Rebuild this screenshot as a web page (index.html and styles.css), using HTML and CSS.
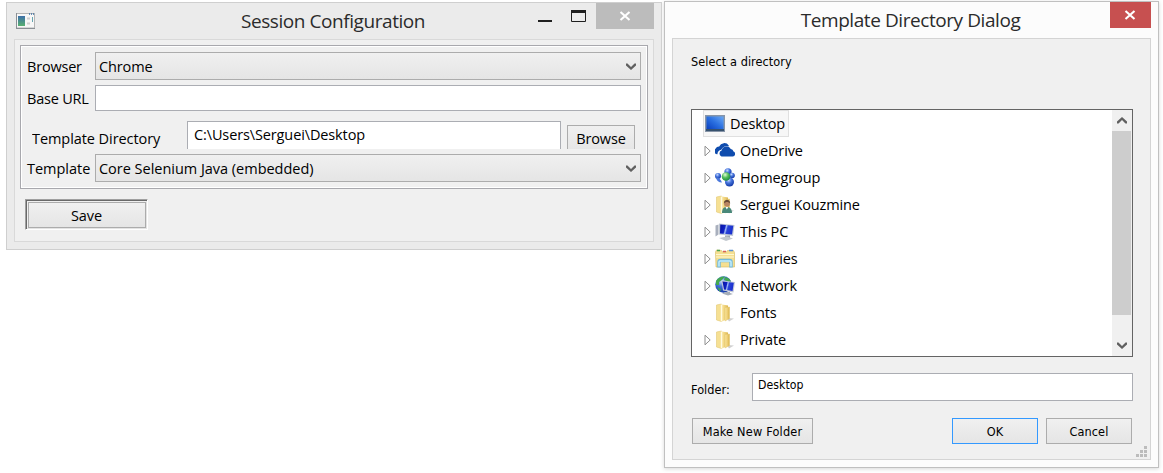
FILE: index.html
```html
<!DOCTYPE html>
<html lang="en">
<head>
<meta charset="utf-8">
<title>Session Configuration</title>
<link rel="stylesheet" href="styles.css">
</head>
<body>
<svg width="0" height="0" class="defs" aria-hidden="true">
  <defs>
    <linearGradient id="screen" x1="0" y1="1" x2="1" y2="0"><stop offset="0" stop-color="#0a3fbe"/><stop offset=".5" stop-color="#2a6fe0"/><stop offset="1" stop-color="#6aa8f5"/></linearGradient>
    <linearGradient id="monitor" x1="0" y1="0" x2="1" y2=".2"><stop offset="0" stop-color="#0712a0"/><stop offset=".4" stop-color="#1022c4"/><stop offset=".5" stop-color="#a5bff6"/><stop offset=".62" stop-color="#2a44d8"/><stop offset="1" stop-color="#1a30cf"/></linearGradient>
    <linearGradient id="fold" x1="0" y1="0" x2="1" y2="0"><stop offset="0" stop-color="#fae69e"/><stop offset=".5" stop-color="#efd078"/><stop offset="1" stop-color="#d9b34a"/></linearGradient>
    <radialGradient id="blue" cx=".4" cy=".3" r=".7"><stop offset="0" stop-color="#c8dcff"/><stop offset=".45" stop-color="#4674dc"/><stop offset="1" stop-color="#143aa8"/></radialGradient>
    <radialGradient id="green" cx=".4" cy=".3" r=".7"><stop offset="0" stop-color="#e0fbd4"/><stop offset=".5" stop-color="#55be5c"/><stop offset="1" stop-color="#1a8a40"/></radialGradient>
    <linearGradient id="appimg" x1="0" y1="0" x2="0" y2="1"><stop offset="0" stop-color="#3c6ea8"/><stop offset="1" stop-color="#58b070"/></linearGradient>
    <symbol id="folder" viewBox="0 0 20 20">
      <path d="M12 15l7 .5-5 3z" fill="#c4c4c4" opacity=".8"/>
      <path d="M1.500 2L6.500 1v17.500l-5-1.500z" fill="#f6e093" stroke="#e2c873" stroke-width=".6"/>
      <path d="M7 1.500l6 1v13l-6 3z" fill="url(#fold)"/>
      <path d="M10 4.500l4.500-.5v11.500L10 18z" fill="url(#fold)" stroke="#e3c76c" stroke-width=".5"/>
      <path d="M5.800 1.500h1.400v17l-1.400-.5z" fill="#fffbe2"/>
    </symbol>
    <symbol id="chev" viewBox="0 0 10 7"><path d="M0 .5h1.500L5 4 8.500.5H10v2L5 7 0 2.500z" fill="#606060"/></symbol>
    <symbol id="cross" viewBox="0 0 12 10"><path d="M1.500 1L10.500 9M10.500 1L1.500 9" fill="none" stroke="#fff" stroke-width="2.100"/></symbol>
    <symbol id="tri" viewBox="0 0 8 12"><path d="M1 1.200L6.200 6 1 10.800z" fill="#fff" stroke="#8f8f8f"/></symbol>
  </defs>
</svg>
<div class="desktop">
  <section class="window session">
    <header class="titlebar">
      <svg class="app-icon" width="20" height="17" viewBox="0 0 20 17">
        <rect x=".5" y=".5" width="18" height="14.500" fill="#f7f7f7" stroke="#b5b5b5"/>
        <path d="M.5 0v15M0 15.500h19" stroke="#8a8f95"/>
        <path d="M13 1h1m1 0h1m1 0h1" stroke="#3d70a4" stroke-width="1.500"/>
        <rect x="2" y="3" width="7" height="10" fill="url(#appimg)"/>
        <path d="M11 5.500h3M11 10.500h3" stroke="#d0d0d0" stroke-width="2"/><path d="M16.500 4v5" stroke="#66a5b0"/>
      </svg>
      <h1 class="title">Session Configuration</h1>
      <div class="controls">
        <svg width="14" height="22" viewBox="0 0 14 22"><path d="M0 18h14" stroke="#1f1f1f" stroke-width="2"/></svg>
        <svg class="maximize" width="15" height="22" viewBox="0 0 15 22"><path d="M.5 8h14v10.500H.5z" fill="none" stroke="#1f1f1f"/><path d="M0 8.500h15" stroke="#1f1f1f" stroke-width="3"/></svg>
        <div class="close"><svg width="12" height="10"><use href="#cross"/></svg></div>
      </div>
    </header>
    <div class="client">
      <div class="group">
        <div class="field"><label>Browser</label><div class="combo"><span>Chrome</span><svg width="10" height="7"><use href="#chev"/></svg></div></div>
        <div class="field url"><label>Base URL</label><div class="input"></div></div>
        <div class="directory"><label>Template Directory</label><div class="input"><span>C:\Users\Serguei\Desktop</span></div><div class="button"><span>Browse</span></div></div>
        <div class="field"><label>Template</label><div class="combo"><span class="wide">Core Selenium Java (embedded)</span><svg width="10" height="7"><use href="#chev"/></svg></div></div>
      </div>
      <div class="save"><div class="button"><span>Save</span></div></div>
    </div>
  </section>
  <section class="window dialog">
    <header class="titlebar">
      <h1 class="title">Template Directory Dialog</h1>
      <div class="close"><svg width="12" height="10"><use href="#cross"/></svg></div>
    </header>
    <div class="client">
      <p class="prompt">Select a directory</p>
      <div class="tree">
        <ul class="nodes">
          <li class="root"><svg width="20" height="17" viewBox="0 0 20 17"><rect x=".5" y=".5" width="19" height="16" fill="#7d93ad" stroke="#8795a8"/><rect x="1.500" y="1.500" width="17" height="12.500" fill="url(#screen)"/><path d="M1 15h18" stroke="#37526e" stroke-width="2"/></svg><span>Desktop</span></li>
          <li><svg class="arrow" width="8" height="12"><use href="#tri"/></svg><svg width="20" height="20" viewBox="0 0 20 20"><path d="M2.500 13.200A3 3 0 0 1 .5 7.800 4 4 0 0 1 4.200 5.500 5.500 5.500 0 0 1 13.800 4.500L13.500 5.500A6 6 0 0 0 6.300 8.800 4 4 0 0 0 2.500 13.200z" fill="#0f4cae"/><path d="M6.500 15.500A3.200 3.200 0 0 1 6.600 9.500 5 5 0 0 1 15.800 8 3.500 3.500 0 0 1 18.500 10.500 2.600 2.600 0 0 1 17.800 15.500z" fill="#0f4cae"/></svg><span>OneDrive</span></li>
          <li><svg class="arrow" width="8" height="12"><use href="#tri"/></svg><svg width="20" height="20" viewBox="0 0 20 20"><circle cx="3" cy="8" r="3" fill="url(#blue)"/><path d="M1 9.500q4 0 6 5-5 0-6-5z" fill="#4a78dc"/><circle cx="13" cy="3.800" r="3.600" fill="url(#blue)"/><circle cx="17" cy="7.500" r="2.800" fill="url(#blue)"/><circle cx="14.500" cy="14" r="4.500" fill="url(#blue)"/><circle cx="11" cy="8.500" r="4.300" fill="url(#green)"/></svg><span>Homegroup</span></li>
          <li><svg class="arrow" width="8" height="12"><use href="#tri"/></svg><svg width="20" height="20" viewBox="0 0 20 20"><use href="#folder"/><path d="M7 18c0-4.500 2-6 4.700-6S17 13.500 17 18z" fill="#498879"/><path d="M10.500 12l1.300 2.500 1.500-2.500z" fill="#fff"/><circle cx="12" cy="8.800" r="3" fill="#b98561"/><path d="M8.800 8.500c0-5 6.400-5 6.400 0-1.800-2-4.600-2-6.400 0z" fill="#684936"/></svg><span>Serguei Kouzmine</span></li>
          <li><svg class="arrow" width="8" height="12"><use href="#tri"/></svg><svg width="20" height="20" viewBox="0 0 20 20"><path d="M.5 3.500l3-1v10l-3 2z" fill="#a9b0bd"/><path d="M4 1.500L19.500 3l-1.500 11-14-1.500z" fill="#bec6d4"/><path d="M5.300 2.500l13 1.300-1.300 8.700-12-1z" fill="url(#monitor)"/><path d="M10 13.500h5v3h-5z" fill="#a0a8b4"/><path d="M4 16l8-1.500 6 2-7 2.500z" fill="#c1c7ce"/></svg><span>This PC</span></li>
          <li><svg class="arrow" width="8" height="12"><use href="#tri"/></svg><svg width="20" height="20" viewBox="0 0 20 20"><path d="M.5 3l1-2 5 .5 1 1.500h4l1-1.500h6l1 2v14.500H1z" fill="#f5df91" stroke="#d4b85f" stroke-width=".6"/><path d="M1 5.500h18M1 8h18" stroke="#fff8cf"/><path d="M2 1.500h3" stroke="#4aa451" stroke-width="1.500"/><path d="M8 2.500h3" stroke="#da6257" stroke-width="1.500"/><path d="M14 1.500h4" stroke="#5a91d2" stroke-width="1.500"/><path d="M4 18.500v-5.500q0-1.500 1.500-1.500h9q1.500 0 1.500 1.500v5.500" fill="none" stroke="#73b9dc" stroke-width="3.500"/><path d="M4 17.500v-4.500q0-1 1-1h10q1 0 1 1v4.500" fill="none" stroke="#c6effd" stroke-width="1.500"/></svg><span>Libraries</span></li>
          <li><svg class="arrow" width="8" height="12"><use href="#tri"/></svg><svg width="20" height="20" viewBox="0 0 20 20"><circle cx="8.500" cy="8.500" r="8.300" fill="url(#blue)"/><path d="M1 5Q4 0 10 .5L7 4 4 6 4 9 1 9zM10 1q5 1 6 5l-4-1-3-1zM2 11l4 2-1 3z" fill="#43a850"/><path d="M6.500 4.500L20 6l-1.500 10.500L8 14.500z" fill="#c3cad7"/><path d="M7.500 5.500l11.300 1.200-1.300 8.300-8.500-1.500z" fill="url(#monitor)"/><path d="M11 16h4v1l3 1-5 1.500-6-2z" fill="#a5adb8"/></svg><span>Network</span></li>
          <li><svg class="arrow none" width="8" height="12"><use href="#tri"/></svg><svg width="20" height="20" viewBox="0 0 20 20"><use href="#folder"/></svg><span>Fonts</span></li>
          <li><svg class="arrow" width="8" height="12"><use href="#tri"/></svg><svg width="20" height="20" viewBox="0 0 20 20"><use href="#folder"/></svg><span>Private</span></li>
        </ul>
        <div class="scrollbar"><svg class="up" width="10" height="7"><use href="#chev"/></svg><div class="thumb"></div><svg width="10" height="7"><use href="#chev"/></svg></div>
      </div>
      <div class="folder-row"><label>Folder:</label><div class="input"><span>Desktop</span></div></div>
      <div class="actions"><div class="button make"><span>Make New Folder</span></div><div class="button ok"><span>OK</span></div><div class="button cancel"><span>Cancel</span></div></div>
      <svg class="grip" width="11" height="11" viewBox="0 0 11 11"><path d="M8 0h3v3H8zM4 4h3v3H4zM8 4h3v3H8zM0 8h3v3H0zM4 8h3v3H4zM8 8h3v3H8z" fill="#bcbcbc"/></svg>
    </div>
  </section>
</div>
</body>
</html>
```
FILE: styles.css
```css
* { box-sizing: border-box; }
body { margin: 0; width: 1163px; height: 473px; overflow: hidden; background: #fff; color: #000; font: 14.500px/20px "Open Sans", "Noto Sans", sans-serif; letter-spacing: -.12px; }
svg { display: block; flex: none; }
.defs { position: absolute; }
span, label { white-space: nowrap; }
.wide { letter-spacing: -.02px; }
.desktop { display: flex; align-items: flex-start; gap: 2px; padding: 1px 0 0 6px; }
.window { border: 1px solid #cfcfcf; flex: none; }
.session { width: 656px; height: 248px; margin-top: 1px; padding: 0 7px; background: #ebebeb; }
.titlebar { display: flex; height: 36px; }
.title { flex: 1; margin: 0; font-size: 19px; font-weight: 400; line-height: 36px; letter-spacing: -.43px; color: #2b2b2b; text-align: center; }
.app-icon { margin: 10px -20px 0 2px; }
.session .title { padding-right: 4px; margin-right: -116px; }
.controls { display: flex; }
.maximize { margin: 0 10px 0 19px; }
.close { display: flex; align-items: center; justify-content: center; width: 58px; height: 26px; padding-right: 1px; background: #bcbcbc; }
.client { border: 1px solid #d9d9d9; background: #f0f0f0; }
.session .client { height: 203px; padding: 5px; }
.group { height: 144px; border: 1px solid #a8a8ad; box-shadow: inset 0 0 0 1px #fff; padding: 6px 6px 0; }
.field { display: flex; align-items: center; height: 28px; }
.field label { width: 68px; flex: none; padding-top: 2px; letter-spacing: -.2px; }
.field:last-child label { letter-spacing: -.02px; }
.combo { display: flex; align-items: center; justify-content: space-between; flex: 1; height: 28px; padding: 0 4px 0 3px; border: 1px solid #acacac; background: linear-gradient(#f0f0f0, #e5e5e5); }
.combo span { padding-top: 2px; }
.input { border: 1px solid #abadb3; background: #fff; }
.url { height: 26px; margin-top: 5px; }
.url .input { flex: 1; height: 26px; }
.directory { display: flex; align-items: flex-start; height: 28px; margin: 10px 0 5px 5px; overflow: hidden; }
.directory label { width: 155px; padding-top: 8px; letter-spacing: -.07px; }
.directory .input { width: 374px; height: 36px; padding: 3px 6px; }
.button { display: flex; align-items: center; justify-content: center; border: 1px solid #acacac; background: linear-gradient(#f0f0f0, #e5e5e5); }
.directory .button { width: 68px; height: 28px; margin: 4px 0 0 6px; }
.save { width: 123px; height: 31px; margin: 10px 0 0 5px; padding: 2px 1px 1px 2px; border: 1px solid; border-color: #a0a0a0 #fff #fff #a0a0a0; box-shadow: inset 1px 1px #696969, inset -1px -1px #e3e3e3; }
.save .button { width: 118px; height: 26px; padding: 2px 1px 0 0; }
.dialog { width: 495px; height: 467px; padding: 0 7px; border-color: #c0c0c0; background: #fcfcfc; box-shadow: 0 1px 4px #d8d8d8; }
.dialog .close { width: 41px; background: #c75050; }
.dialog .title { padding-right: 2px; margin-right: -41px; }
.dialog .client { position: relative; height: 422px; padding: 0 17px 0 18px; border-color: #d4d4d4; font: 12.600px/16px "DejaVu Sans Condensed", "DejaVu Sans", sans-serif; letter-spacing: .06px; }
.prompt { margin: 0; padding-top: 15px; height: 70px; }
.tree { display: flex; height: 248px; border: 1px solid #646464; background: #fff; }
.nodes { flex: 1; margin: 0; padding: 0 0 0 11px; list-style: none; font: 14.500px/20px "Open Sans", "Noto Sans", sans-serif; letter-spacing: -.12px; }
.nodes li { display: flex; align-items: center; height: 27px; gap: 5px; }
.nodes .root { width: 86px; padding-left: 1px; border: 1px solid #e0e0e0; background: #f7f7f7; }
.arrow { margin: 1px -2px 0 1px; }
.arrow.none { visibility: hidden; }
.scrollbar { display: flex; flex-direction: column; align-items: center; width: 20px; padding-right: 1px; background: #f0f0f0; }
.up { transform: scaleY(-1); margin: 7px 0; }
.thumb { align-self: flex-start; width: 19px; height: 184px; background: #cdcdcd; margin-bottom: 27px; }
.folder-row { display: flex; height: 28px; margin-top: 16px; }
.folder-row label { width: 61px; padding-top: 9px; }
.folder-row .input { flex: 1; padding: 3px 5px; font-size: 12.200px; }
.actions { display: flex; margin: 17px 1px 0; }
.actions .button { height: 26px; padding-top: 1px; }
.actions .make { width: 121px; margin-right: auto; letter-spacing: .2px; }
.ok { width: 86px; margin-right: 8px; }
.actions .ok { border-color: #3399ff; }
.cancel { width: 86px; }
.grip { position: absolute; right: 3px; bottom: 2px; }
```
